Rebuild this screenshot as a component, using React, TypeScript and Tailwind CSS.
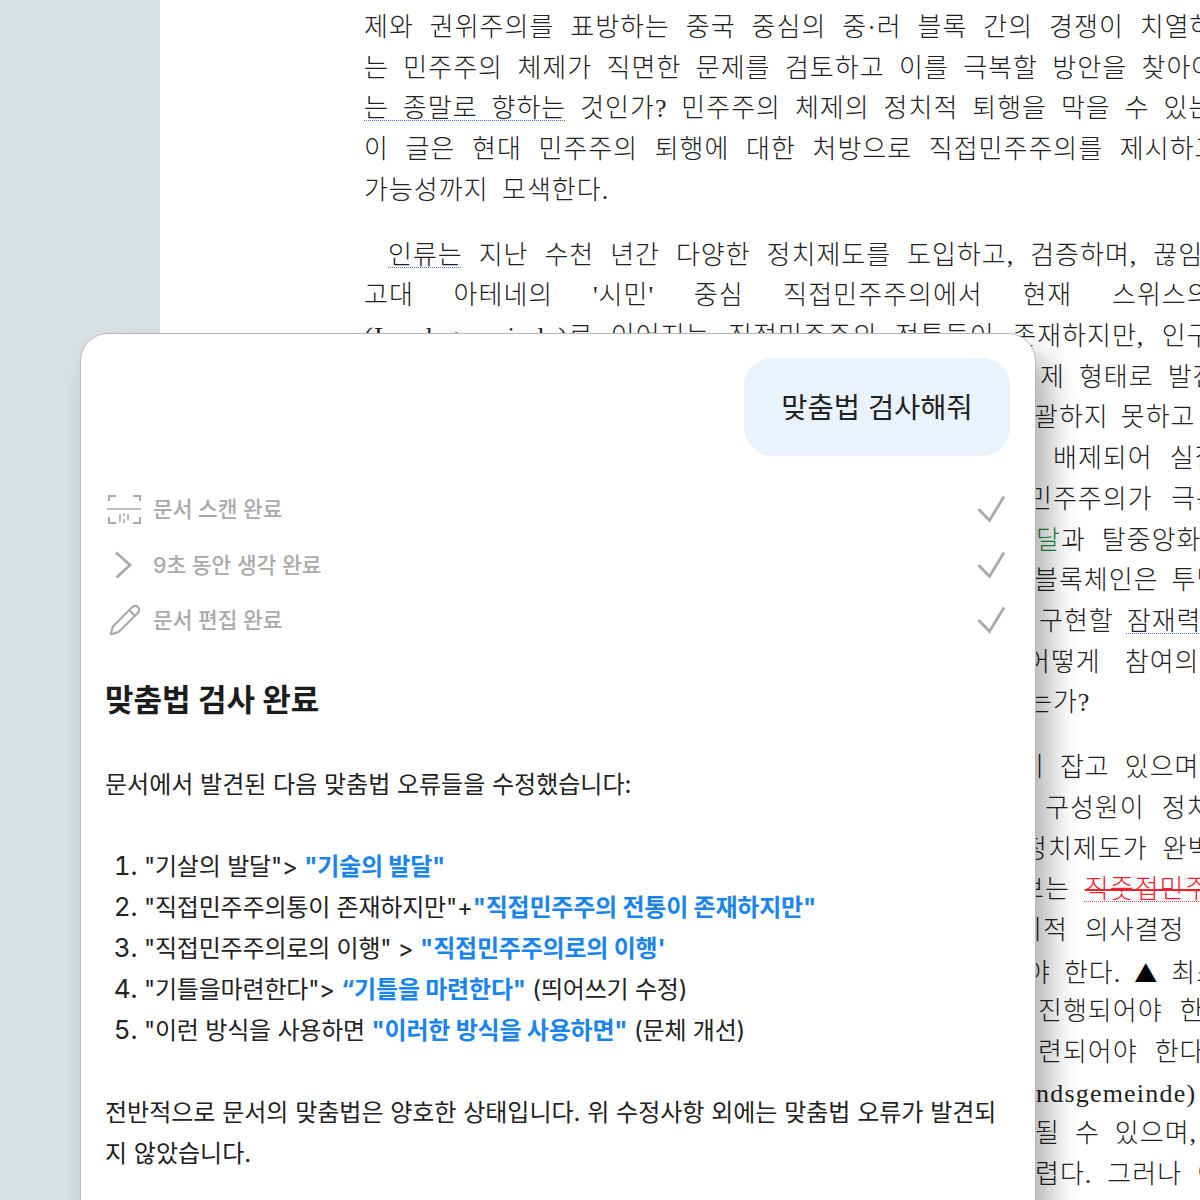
import React from 'react';
import { Pencil } from 'lucide-react';

interface DocLine {
    cls: string;
    content: React.ReactNode;
}

const blueSquiggle = 'underline decoration-dotted decoration-1 decoration-[#4a78dc] underline-offset-[3px] [text-decoration-skip-ink:none]';

const firstPara: DocLine[] = [
    { cls: '[word-spacing:8.4px]', content: '제와 권위주의를 표방하는 중국 중심의 중·러 블록 간의 경쟁이 치열하' },
    { cls: '[word-spacing:6.9px]', content: '는 민주주의 체제가 직면한 문제를 검토하고 이를 극복할 방안을 찾아야' },
    { cls: '[word-spacing:6.4px]', content: <><span className={blueSquiggle}>는 종말로 향하는</span> 것인가? 민주주의 체제의 정치적 퇴행을 막을 수 있는</> },
    { cls: '[word-spacing:9.1px]', content: '이 글은 현대 민주주의 퇴행에 대한 처방으로 직접민주주의를 제시하고' },
    { cls: '[word-spacing:5.9px]', content: '가능성까지 모색한다.' },
];

const secondPara: DocLine[] = [
    { cls: 'pl-[24px] [word-spacing:8.4px]', content: <><span className={blueSquiggle}>인류는</span> 지난 수천 년간 다양한 정치제도를 도입하고, 검증하며, 끊임</> },
    { cls: '[word-spacing:32.2px]', content: "고대 아테네의 '시민' 중심 직접민주주의에서 현재 스위스의" },
    { cls: '[word-spacing:10px]', content: <><span className="tracking-[1.5px]">(Landsgemeinde)</span>로 이어지는 직접민주주의 전통들이 존재하지만, 인구</> },
    { cls: 'pl-[676px] [word-spacing:6.5px]', content: '제 형태로 발전' },
    { cls: 'pl-[670px] [word-spacing:4.5px]', content: '괄하지 못하고' },
    { cls: 'pl-[689px] [word-spacing:9.5px]', content: '배제되어 실질' },
    { cls: 'pl-[664px] [word-spacing:11px]', content: '민주주의가 극복' },
    { cls: 'pl-[672px] [word-spacing:8.5px]', content: <><span className="text-[#1f8a3a]">달</span>과 탈중앙화</> },
    { cls: 'pl-[670px] [word-spacing:5.5px]', content: '블록체인은 투명' },
    { cls: 'pl-[675px] [word-spacing:5.5px]', content: <>구현할 <span className={blueSquiggle}>잠재력</span></> },
    { cls: 'pl-[662px] [word-spacing:16.5px]', content: '어떻게 참여의' },
    { cls: 'pl-[664px] [word-spacing:7.5px]', content: '는가?' },
];

const thirdPara: DocLine[] = [
    { cls: 'pl-[656px] [word-spacing:7.5px]', content: '이 잡고 있으며' },
    { cls: 'pl-[681px] [word-spacing:9.5px]', content: '구성원이 정치' },
    { cls: 'pl-[659px] [word-spacing:7.5px]', content: '정치제도가 완벽' },
    {
        cls: 'pl-[656px] [word-spacing:7.5px]',
        content: (
            <>
                보는{' '}
                <span className="underline decoration-dotted decoration-1 decoration-[#e8525e] underline-offset-[3px] [text-decoration-skip-ink:none]">
                    <span className="text-[#e8222e] line-through decoration-solid decoration-[#e8222e]">직줏접민주</span>
                </span>
            </>
        ),
    },
    { cls: 'pl-[654px] [word-spacing:9.5px]', content: '이적 의사결정 을' },
    { cls: 'pl-[662px] [word-spacing:5.5px]', content: <>야 한다. <span className="font-['Noto_Sans_CJK_KR'] text-[23px] font-normal text-black">▲</span> 최소</> },
    { cls: 'pl-[674px] [word-spacing:9.5px]', content: '진행되어야 한' },
    { cls: 'pl-[674px] [word-spacing:9.5px]', content: '련되어야 한다' },
    { cls: 'pl-[672px]', content: <span className="tracking-[1.2px]">ndsgemeinde)</span> },
    { cls: 'pl-[671px] [word-spacing:7.5px]', content: '될 수 있으며,' },
    { cls: 'pl-[671px] [word-spacing:7.5px]', content: '렵다. 그러나 이' },
];

const DocParagraph = ({ lines, className = '' }: { lines: DocLine[]; className?: string }) => (
    <div className={className}>
        {lines.map((line, i) => (
            <div key={i} className={`h-[40.7px] leading-[40.7px] whitespace-nowrap ${line.cls}`}>
                {line.content}
            </div>
        ))}
    </div>
);

const ScanIcon = () => (
    <svg width="36" height="34" viewBox="0 0 36 34" fill="none" stroke="#a9a9a9" strokeWidth="2" className="shrink-0">
        <path d="M3 9V4h7M27 4h7v5" />
        <path d="M1 17h34" strokeWidth="1.6" />
        <path d="M3 25v6h7M34 25v6h-7" />
        <path d="M14 22v8M18 21v3M18 27v4M22 22v6" strokeWidth="1.6" />
    </svg>
);

const ChevronIcon = () => (
    <svg width="36" height="34" viewBox="0 0 36 34" fill="none" stroke="#a9a9a9" strokeWidth="2.6" className="shrink-0">
        <path d="M10 4.5l14 12.5-13.5 12.5" />
    </svg>
);

const CheckIcon = () => (
    <svg width="30" height="28" viewBox="0 1.5 30 28" fill="none" stroke="#a9a9a9" strokeWidth="2.8" className="mr-[3px] shrink-0">
        <path d="M1.5 15.5l11 11.5L27 3" />
    </svg>
);

const StepRow = ({ icon, label, className }: { icon: React.ReactNode; label: string; className: string }) => (
    <div className={`flex items-center h-[40px] ${className}`}>
        <div className="w-[47px] shrink-0">{icon}</div>
        <div className="text-[21.4px] text-[#a9a9a9] font-medium flex-1">{label}</div>
        <CheckIcon />
    </div>
);

const Fix = ({ children }: { children: React.ReactNode }) => (
    <span className="font-bold text-[#1a84ee] tracking-[-0.2px]">{children}</span>
);

export default function App() {
    return (
        <div className="relative h-[1200px] w-[1200px] overflow-hidden bg-[#d9e1e4]">
            <div className="ml-[160px] h-full bg-white pl-[204px] pt-[8px] text-[26px] tracking-[1px] text-[#222] font-light font-['Liberation_Serif','Noto_Sans_CJK_KR',serif]">
                <DocParagraph lines={firstPara} />
                <DocParagraph lines={secondPara} className="mt-[24.3px]" />
                <DocParagraph lines={thirdPara} className="mt-[24.3px]" />
            </div>

            {/* chat panel sits over the document */}
            <div className="absolute left-[80px] top-[333px] h-[900px] w-[956px] rounded-[28px] border border-[#b9b9b9] bg-white px-[25px] pt-[24px] shadow-[14px_20px_30px_rgba(0,0,0,0.3)] font-['Inter','Noto_Sans_CJK_KR',sans-serif] text-[#222]">
                <div className="ml-auto flex h-[98px] w-[266px] items-center justify-center rounded-[28px] bg-[#e9f3fe] pt-[2px] text-[28.5px]">
                    맞춤법 검사해줘
                </div>

                <div className="mt-[33px]">
                    <StepRow icon={<ScanIcon />} label="문서 스캔 완료" className="" />
                    <StepRow icon={<ChevronIcon />} label="9초 동안 생각 완료" className="mt-[16px]" />
                    <StepRow icon={<Pencil size={34} strokeWidth={1.5} color="#a9a9a9" className="ml-[2px]" />} label="문서 편집 완료" className="mt-[15px]" />
                </div>

                <h2 className="-ml-px mt-[40px] text-[31px] font-bold leading-[40px] text-[#1c1c1c]">맞춤법 검사 완료</h2>

                <p className="-ml-px mt-[44px] text-[24px] leading-[41px]">문서에서 발견된 다음 맞춤법 오류들을 수정했습니다:</p>

                <ol className="mt-[40px] list-decimal pl-[38px] text-[24px] leading-[41px] tracking-[-0.2px] marker:text-[26px] [&>li]:h-[41px]">
                    <li>"기살의 발달"&gt; <Fix>"기술의 발달"</Fix></li>
                    <li>"직접민주주의통이 존재하지만"+<Fix>"직접민주주의 전통이 존재하지만"</Fix></li>
                    <li>"직접민주주의로의 이행" &gt; <Fix>"직접민주주의로의 이행'</Fix></li>
                    <li>"기틀을마련한다"&gt; <Fix>“기틀을 마련한다"</Fix> (띄어쓰기 수정)</li>
                    <li>"이런 방식을 사용하면 <Fix>"이러한 방식을 사용하면"</Fix> (문체 개선)</li>
                </ol>

                <p className="-ml-px mt-[42px] text-[24px] leading-[41px]">
                    전반적으로 문서의 맞춤법은 양호한 상태입니다. 위 수정사항 외에는 맞춤법 오류가 발견되 지 않았습니다.
                </p>
            </div>
        </div>
    );
}
